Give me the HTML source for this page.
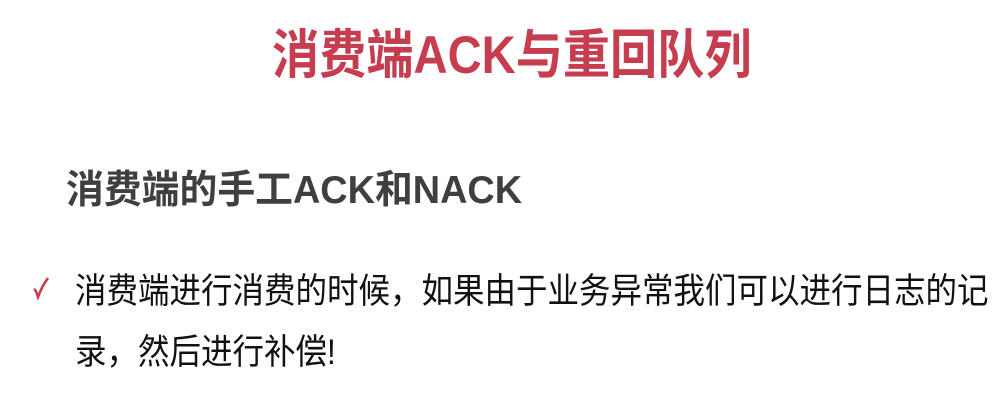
<!DOCTYPE html>
<html><head><meta charset="utf-8"><style>
body{margin:0;width:1001px;height:415px;background:#fff;overflow:hidden;position:relative;font-family:"Liberation Sans","Noto Sans CJK SC",sans-serif}
.t{position:absolute;left:272px;top:24px;font-size:53px;line-height:64px;font-weight:bold;color:#c73d50;white-space:nowrap;transform:scaleX(0.89);transform-origin:0 0}
.s{position:absolute;left:66px;top:164px;font-size:39px;line-height:54px;font-weight:bold;color:#3f3f3f;white-space:nowrap;transform:scaleX(0.97);transform-origin:0 0}
.b{position:absolute;left:75px;font-size:35px;line-height:46px;color:#111;white-space:nowrap;transform:scaleX(0.9);transform-origin:0 0}
.ck{position:absolute;left:33px;top:276px;width:16px;height:24px}
</style></head><body>
<div class="t">消费端ACK与重回队列</div>
<div class="s">消费端的手工ACK和NACK</div>
<svg class="ck" viewBox="0 0 16 24"><path d="M1 13 Q3 14 5 21 Q9 10 15 2" fill="none" stroke="#c73d50" stroke-width="2.6"/></svg>
<div class="b" style="top:269px">消费端进行消费的时候，如果由于业务异常我们可以进行日志的记</div>
<div class="b" style="top:330px">录，然后进行补偿!</div>
</body></html>
